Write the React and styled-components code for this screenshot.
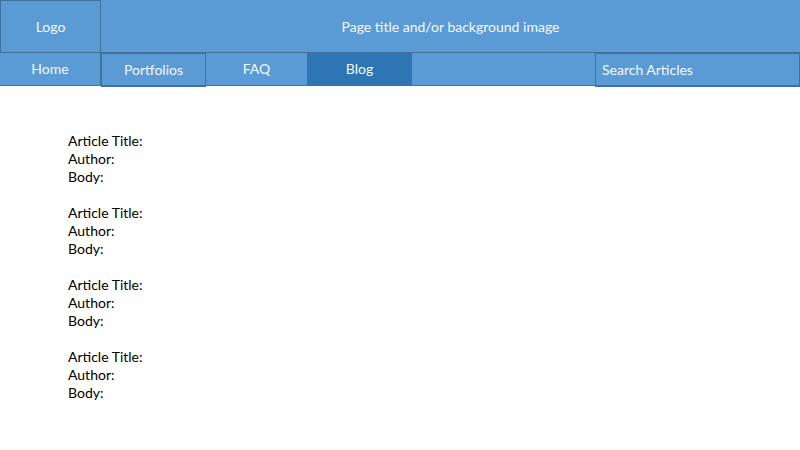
import React from "react";
import styled, { createGlobalStyle } from "styled-components";

const Global = createGlobalStyle`
  html, body { margin: 0; padding: 0; background: #ffffff; }
  body { font-family: Lato, "Open Sans", sans-serif; }
`;

const Page = styled.div`
  width: 800px;
  height: 450px;
  background: #fff;
  overflow: hidden;
`;

const Header = styled.header`
  display: flex;
  height: 53px;
  background: #5b9bd5;
  border-bottom: 1px solid #41719c;
  box-sizing: border-box;
  color: #f4f8fc;
  font-size: 14px;
`;

const Logo = styled.div`
  width: 101px;
  box-sizing: border-box;
  border: 1px solid #41719c;
  border-bottom: none;
  display: flex;
  align-items: center;
  justify-content: center;
`;

const Title = styled.div`
  flex: 1;
  display: flex;
  align-items: center;
  justify-content: center;
`;

const Nav = styled.nav`
  display: flex;
  height: 33px;
  background: #5b9bd5;
  border-bottom: 1px solid #41719c;
  box-sizing: border-box;
  color: #f4f8fc;
  font-size: 14px;
`;

const NavItem = styled.div`
  width: ${(p) => p.$w}px;
  box-sizing: border-box;
  display: flex;
  align-items: center;
  justify-content: ${(p) => (p.$left ? "flex-start" : "center")};
  padding-left: ${(p) => (p.$left ? "6px" : "0")};
  padding-bottom: 1px;
  background: ${(p) => (p.$active ? "#2e75b6" : "#5b9bd5")};
  border-right: 1px solid #41719c;
  ${(p) =>
    p.$boxed &&
    `
    border: 1px solid #41719c;
    border-bottom-width: 2px;
    height: 34px;
    position: relative;
    z-index: 1;
  `}
`;

const Spacer = styled.div`
  flex: 1;
`;

const Main = styled.main`
  padding: 46px 0 0 68px;
  color: #000;
  font-size: 14px;
  line-height: 18px;
`;

const Article = styled.div`
  margin-bottom: 18px;
`;

const Line = styled.div`
  height: 18px;
`;

export default function App() {
  const articles = [0, 1, 2, 3];
  return (
    <Page>
      <Global />
      <Header>
        <Logo>Logo</Logo>
        <Title>Page title and/or background image</Title>
      </Header>
      <Nav>
        <NavItem $w={101}>Home</NavItem>
        <NavItem $w={105} $boxed>Portfolios</NavItem>
        <NavItem $w={102}>FAQ</NavItem>
        <NavItem $w={104} $active>Blog</NavItem>
        <Spacer />
        <NavItem $w={205} $boxed $left>Search Articles</NavItem>
      </Nav>
      <Main>
        {articles.map((i) => (
          <Article key={i}>
            <Line>Article Title:</Line>
            <Line>Author:</Line>
            <Line>Body:</Line>
          </Article>
        ))}
      </Main>
    </Page>
  );
}
